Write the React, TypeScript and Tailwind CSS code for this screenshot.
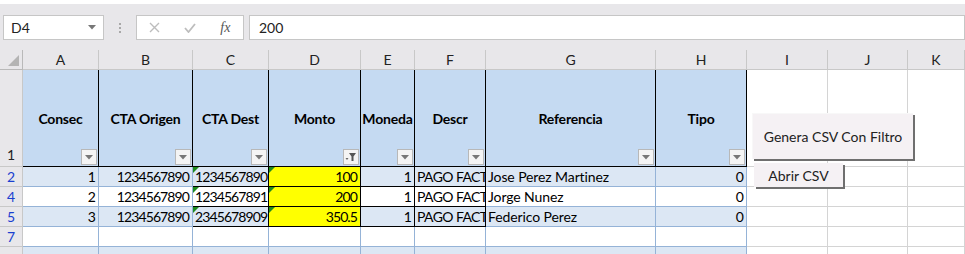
import React from "react";

const cols = [
  { key: "A", w: 76, head: "Consec" },
  { key: "B", w: 94, head: "CTA Origen" },
  { key: "C", w: 76, head: "CTA Dest" },
  { key: "D", w: 92, head: "Monto" },
  { key: "E", w: 54, head: "Moneda" },
  { key: "F", w: 71, head: "Descr" },
  { key: "G", w: 170, head: "Referencia" },
  { key: "H", w: 91, head: "Tipo" },
  { key: "I", w: 81, head: "" },
  { key: "J", w: 80, head: "" },
  { key: "K", w: 57, head: "" },
];

const rows = [
  { n: "2", band: true, a: "1", b: "1234567890", c: "1234567890", d: "100", e: "1", f: "PAGO FACT", g: "Jose Perez Martinez", h: "0" },
  { n: "4", band: false, a: "2", b: "1234567890", c: "1234567891", d: "200", e: "1", f: "PAGO FACT", g: "Jorge Nunez", h: "0" },
  { n: "5", band: true, a: "3", b: "1234567890", c: "2345678909", d: "350.5", e: "1", f: "PAGO FACT", g: "Federico Perez", h: "0" },
  { n: "7", band: false },
  { n: "", band: true },
];

const gridCols = "grid-cols-[23px_76px_94px_76px_92px_54px_71px_170px_91px_81px_80px_57px]";

function FilterButton({ active }: { active?: boolean }) {
  return (
    <div className="absolute bottom-[1px] right-[1px] w-[16px] h-[16px] bg-[#f4f4f4] border border-[#b8b8b8] flex items-center justify-center">
      {active ? (
        <svg width="12" height="10" viewBox="0 0 12 10">
          <path d="M4 1h7L8.5 4.5V9h-2V4.5z" fill="#555" />
          <path d="M0.5 6h3L2 8z" fill="#666" />
        </svg>
      ) : (
        <svg width="8" height="5" viewBox="0 0 8 5">
          <path d="M0 0h8L4 4.5z" fill="#777" />
        </svg>
      )}
    </div>
  );
}

function GreenTick() {
  return (
    <svg className="absolute top-0 left-0" width="6" height="6" viewBox="0 0 6 6">
      <path d="M0 0h6L0 6z" fill="#1e8a1e" />
    </svg>
  );
}

export default function App() {
  const font = { fontFamily: "Lato, 'Open Sans', sans-serif" };
  const black = new Set(["C", "D", "E", "F"]);

  return (
    <div className="w-[965px] h-[254px] overflow-hidden bg-[#e8e7ea] relative" style={font}>
      {/* top strip */}
      <div className="h-[4px] bg-white" />

      {/* formula bar */}
      <div className="h-[46px] flex items-start pt-[11px] pl-[3px]">
        <div className="w-[101px] h-[25px] bg-white border border-[#c6c6c6] flex items-center justify-between pl-[7px] pr-[7px]">
          <span className="text-[14px] text-[#222]">D4</span>
          <svg width="8" height="5" viewBox="0 0 8 5"><path d="M0 0h8L4 4.5z" fill="#777" /></svg>
        </div>
        <div className="w-[32px] h-[25px] flex flex-col items-center justify-center gap-[2px]">
          <span className="w-[2px] h-[2px] bg-[#a8a8a8]" />
          <span className="w-[2px] h-[2px] bg-[#a8a8a8]" />
          <span className="w-[2px] h-[2px] bg-[#a8a8a8]" />
        </div>
        <div className="w-[108px] h-[25px] bg-white border border-[#c6c6c6] flex items-center">
          <div className="w-[36px] flex justify-center">
            <svg width="11" height="11" viewBox="0 0 11 11"><path d="M1 1l9 9M10 1l-9 9" stroke="#bdbdbd" strokeWidth="1.4" /></svg>
          </div>
          <div className="w-[36px] flex justify-center">
            <svg width="12" height="10" viewBox="0 0 12 10"><path d="M1 5l3.5 4L11 1" stroke="#bdbdbd" strokeWidth="1.8" fill="none" /></svg>
          </div>
          <div className="w-[36px] flex justify-center">
            <span className="italic text-[14px] text-[#555]" style={{ fontFamily: "'Liberation Serif', serif" }}>fx</span>
          </div>
        </div>
        <div className="ml-[5px] flex-1 h-[25px] bg-white border border-[#c6c6c6] flex items-center pl-[9px]">
          <span className="text-[14px] text-[#222]">200</span>
        </div>
      </div>

      {/* sheet */}
      <div className={`grid ${gridCols} grid-rows-[20px_97px_20px_20px_20px_20px_20px] bg-white`}>
        {/* column header row */}
        <div className="bg-[#e8e7ea] border-r border-b border-[#b9b9b9] relative">
          <svg className="absolute right-[3px] bottom-[3px]" width="11" height="11" viewBox="0 0 11 11">
            <path d="M11 0v11H0z" fill="#b4b4b4" />
          </svg>
        </div>
        {cols.map((c) => (
          <div key={c.key} className="bg-[#e8e7ea] border-r border-b border-[#c8c8c8] flex items-center justify-center text-[14px] text-[#222]">
            {c.key}
          </div>
        ))}

        {/* row 1 */}
        <div className="bg-[#e8e7ea] border-r border-b border-[#c8c8c8] flex items-end pl-[7px] pb-[1px] text-[14px] text-[#222]">1</div>
        {cols.map((c, i) =>
          i < 8 ? (
            <div
              key={c.key}
              className="relative bg-[#c5daf2] border-b border-b-black border-r border-r-black flex items-center justify-center font-bold text-[14px] tracking-[-0.2px] text-black"
            >
              {c.head}
              <FilterButton active={c.key === "D"} />
            </div>
          ) : (
            <div key={c.key} className="border-r border-b border-[#d4d4d4]" />
          )
        )}

        {/* data rows */}
        {rows.map((r, ri) => (
          <React.Fragment key={ri}>
            <div className="bg-[#e8e7ea] border-r border-b border-[#c8c8c8] flex items-center pl-[7px] text-[14px] text-[#1a3fd0]">{r.n}</div>
            {cols.map((c, i) => {
              const inTable = i < 8;
              const val = (r as Record<string, string | boolean>)[c.key.toLowerCase()] as string | undefined;
              const isBlack = black.has(c.key) && ri < 3;
              const bg = !inTable ? "bg-white" : c.key === "D" && ri < 3 ? "bg-[#ffff00]" : r.band ? "bg-[#dce7f4]" : "bg-white";
              const border = !inTable
                ? "border-[#d4d4d4]"
                : isBlack
                ? "border-black"
                : "border-[#95b3d7]";
              const left = c.key === "F" || c.key === "G" || c.key === "C";
              const align = left ? "justify-start pl-[2px]" : "justify-end pr-[3px]";
              const track = c.key === "G" ? "tracking-[-0.1px]" : c.key === "F" ? "tracking-[-0.6px]" : "tracking-[-0.9px]";
              return (
                <div key={c.key} className={`relative ${bg} border-r border-b ${border} flex items-center ${align} ${track} text-[14px] text-black whitespace-nowrap overflow-hidden`}>
                  {(c.key === "C" || c.key === "D") && ri < 3 && <GreenTick />}
                  {val}
                </div>
              );
            })}
          </React.Fragment>
        ))}
      </div>

      {/* buttons over the sheet */}
      <button className="absolute left-[752px] top-[113px] w-[161px] h-[46px] bg-[#f5f1f4] border-t border-l border-[#f8f8f8] shadow-[2px_2px_0_#6f6f6f] flex items-center justify-center text-[14px] text-[#222]">
        Genera CSV Con Filtro
      </button>
      <button className="absolute left-[754px] top-[163px] w-[89px] h-[24px] bg-[#f5f1f4] shadow-[2px_2px_0_#6f6f6f] flex items-center justify-center text-[14px] text-[#222]">
        Abrir CSV
      </button>
    </div>
  );
}
